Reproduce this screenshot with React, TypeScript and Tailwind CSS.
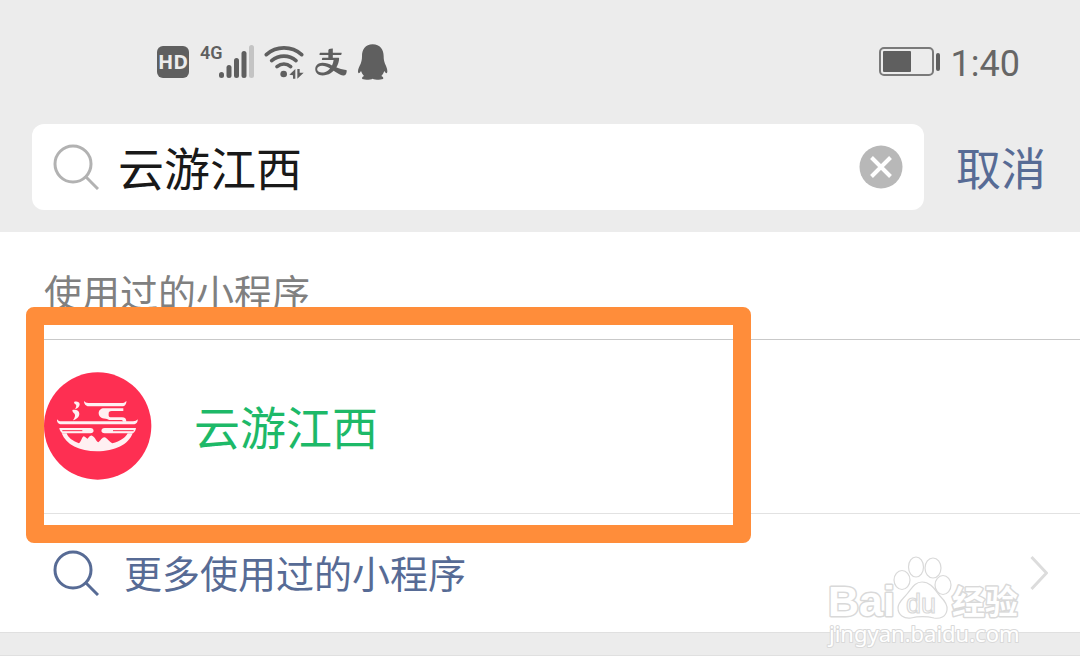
import React, { useState } from "react";
import { AiOutlineAlipay } from "react-icons/ai";

type IconProps = {
  className?: string;
};

const SearchIcon = ({ className }: IconProps) => (
  <svg
    viewBox="0 0 46 46"
    className={`size-[46px] shrink-0 ${className ?? ""}`}
    fill="none"
    stroke="currentColor"
    strokeWidth="3"
    aria-hidden="true"
  >
    <circle cx="20" cy="20" r="18" />
    <path d="M32 32 45 45" />
  </svg>
);

const SignalIcon = () => (
  <svg viewBox="0 0 54 36" className="w-[54px] h-9 overflow-visible" fill="currentColor">
    <text x="-1" y="15" fontFamily="Roboto, sans-serif" fontWeight="600" fontSize="18">
      4G
    </text>
    <rect x="18" y="28" width="5" height="6" rx="2.5" />
    <rect x="25.5" y="21" width="5" height="13" rx="2.5" />
    <rect x="33" y="14" width="5" height="20" rx="2.5" />
    <rect x="40.5" y="7" width="5" height="27" rx="2.5" />
    <rect x="48" y="1" width="5" height="33" rx="2.5" fill="#c4c4c4" />
  </svg>
);

const WifiIcon = () => (
  <svg viewBox="370 44 120 102" className="w-10 h-[34px]" fill="none">
    <g stroke="currentColor" strokeWidth="11" strokeLinecap="round">
      <path d="M377 73c30-27 76-27 106 0" />
      <path d="M393 91c22-18 52-18 73 0" />
      <path d="M409 109c13-10 29-10 41 0" />
    </g>
    <circle cx="429" cy="131" r="10" fill="currentColor" />
    <path d="M446 133l18-17v29h-7v-10zM470 116h7v11h12l-19 18z" fill="currentColor" />
  </svg>
);

const QqIcon = () => (
  <svg viewBox="659 43 90 108" className="w-[30px] h-9" fill="currentColor">
    <path d="M703 44c22 0 33 16 33 36 0 8 1 15 4 22 4 8 7 16 7 23 0 6-3 9-9-1-2 6-5 11-9 15 4 2 6 4 6 7 0 6-26 5-32 1-6 4-32 5-32-1 0-3 2-5 6-7-4-4-7-9-9-15-6 10-9 7-9 1 0-7 4-15 8-23 3-7 4-14 4-22 0-20 10-36 32-36z" />
  </svg>
);

const BatteryIcon = () => (
  <svg viewBox="0 0 62 30" className="w-[62px] h-[30px]" fill="none">
    <rect x="1" y="1" width="53" height="27" rx="4" stroke="#7a7a7a" strokeWidth="2" />
    <rect x="4" y="4" width="28" height="21" rx="1" fill="currentColor" />
    <rect x="57" y="6" width="4" height="18" rx="2" fill="currentColor" />
  </svg>
);

const StatusBar = () => (
  <div className="flex items-center justify-between h-[124px] pl-[157px] pr-[60px] text-[#5f5f5f]">
    <div className="flex items-center gap-3">
      <span className="flex items-center justify-center size-8 rounded-md bg-[#5f5f5f] text-[#ececec] text-xl font-bold font-['Open_Sans',sans-serif]">
        HD
      </span>
      <div className="flex items-center gap-[9px]">
        <SignalIcon />
        <WifiIcon />
        <AiOutlineAlipay className="size-9" />
        <QqIcon />
      </div>
    </div>
    <div className="flex items-center gap-2.5">
      <BatteryIcon />
      <time className="pt-1 text-[36px] leading-10 font-['Roboto',sans-serif] text-[#666666]">
        1:40
      </time>
    </div>
  </div>
);

const SearchBar = () => {
  const [keyword, setKeyword] = useState("云游江西");

  return (
    <form
      className="flex items-center gap-8 pl-8 pr-[34px] pb-[22px]"
      onSubmit={(e) => e.preventDefault()}
    >
      <div className="flex items-center flex-1 min-w-0 h-[86px] px-[21px] bg-white rounded-xl">
        <SearchIcon className="text-[#b2b2b2]" />
        <input
          type="text"
          aria-label="搜索"
          value={keyword}
          onChange={(e) => setKeyword(e.target.value)}
          className="flex-1 min-w-0 ml-[19px] pb-0.5 text-[46px] leading-[60px] text-[#191919] outline-none"
        />
        <button type="button" aria-label="清除" onClick={() => setKeyword("")}>
          <svg viewBox="0 0 44 44" className="size-11">
            <circle cx="22" cy="22" r="21.5" fill="#b8b8b8" />
            <path d="M12.5 12.5l19 19M31.5 12.5l-19 19" stroke="#fff" strokeWidth="4" />
          </svg>
        </button>
      </div>
      <button type="button" className="text-[45px] leading-[60px] text-[#576b95]">
        取消
      </button>
    </form>
  );
};

const AppLogo = () => (
  <svg viewBox="42 36 322 324" className="size-[108px] shrink-0" aria-hidden="true">
    <circle cx="202" cy="198" r="161" fill="#fe2f52" />
    <g fill="#fff0f2">
      <path d="M131 126c8-3 17 0 17 7 0 8-7 13-14 15 3-6 5-11 3-14-2-2-5-1-6-8z" />
      <path d="M126 150c11-3 21 2 21 11 0 11-10 17-19 20 5-7 8-15 5-19-2-3-7-4-7-12z" />
      <path d="M161 123c3 4 7 6 13 6h100c7 0 11-2 14-7 1 9-4 17-13 17H175c-9 0-14-8-14-16z" />
      <path d="M205 160c0-9 7-15 16-15h58v8h-35c-7 0-9 3-9 8-1 9 2 11 10 11h30c9 0 13 4 13 13h-10c0-3-2-5-7-5h-30c-7 0-9-4-15-4-14 0-21-7-21-16z" />
      <path d="M80 178c4 5 7 6 15 6h213c7 0 11-2 14-6 1 9-5 15-13 15H93c-8 0-14-6-13-15z" />
      <path d="M87 204h93c13 0 13 16 0 16H96c-5-4-8-9-9-16z" />
      <path d="M223 204h94c-1 7-4 12-9 16h-85c-13 0-13-16 0-16z" />
      <path d="M94 220h15c4 12 17 23 37 30 7-5 8-18 14-21 5 1 8 7 12 7 5-6 9-10 13-9 8 2 12 16 19 20 7-5 11-15 18-15 9 1 14 14 24 18 24-6 40-17 46-30h15c-12 34-54 54-107 54S107 254 94 220z" />
    </g>
    <path d="M96 212h60M248 212h62" stroke="#fe2f52" strokeWidth="3" />
  </svg>
);

const Watermark = () => (
  <svg
    viewBox="0 0 200 96"
    className="absolute right-[54px] top-[41px] w-[200px] h-24 pointer-events-none"
    fill="#ffffff"
    stroke="#d9d9d9"
    strokeWidth="1.2"
    aria-hidden="true"
  >
    <g strokeWidth="3" strokeLinejoin="round" paintOrder="stroke">
      <text x="2" y="61" fontFamily="'Liberation Sans', sans-serif" fontWeight="700" fontSize="43">
        Bai
      </text>
      <text x="126" y="59" fontFamily="'Noto Sans CJK SC', sans-serif" fontWeight="700" fontSize="33">
        经验
      </text>
      <text x="3" y="87" fontFamily="'Noto Sans', sans-serif" fontSize="22" strokeWidth="2">
        jingyan.baidu.com
      </text>
    </g>
    <ellipse cx="76" cy="25" rx="8" ry="9.5" />
    <ellipse cx="90" cy="12" rx="7.5" ry="10" />
    <ellipse cx="107" cy="13" rx="8" ry="10" />
    <ellipse cx="117" cy="30" rx="8" ry="9.5" />
    <path d="M96 27c9 0 13 8 18 14 5 5 8 9 7 14-1 7-7 9-13 8-8-2-15-2-23 0-7 1-13-3-13-10 0-6 5-9 9-14 5-6 8-12 15-12z" />
    <text x="80" y="58" fontFamily="'Liberation Sans', sans-serif" fontSize="27">
      du
    </text>
  </svg>
);

const App = () => {
  return (
    <div className="min-h-screen bg-white font-['Noto_Sans_CJK_SC',sans-serif]">
      <header className="bg-[#ececec]">
        <StatusBar />
        <SearchBar />
      </header>

      <main>
        <section>
          <h2 className="ml-11 h-[108px] pt-[31px] text-[38px] leading-[56px] text-[#808080] border-b border-[#c9c9c9]">
            使用过的小程序
          </h2>
          <div className="relative">
            <a
              href="#yunyou"
              className="flex items-center gap-[42px] ml-11 pb-0.5 h-[174px] border-b border-[#e2e2e2]"
            >
              <AppLogo />
              <span className="pb-0.5 text-[46px] leading-[60px] text-[#1db968]">
                云游江西
              </span>
            </a>
            {/* highlight frame around the result */}
            <div className="absolute left-[26px] -top-[33px] -bottom-[29px] w-[725px] rounded-lg border-[18px] border-[#ff8d3a] pointer-events-none" />
          </div>
          <div className="relative">
            <a
              href="#more"
              className="flex items-center h-[118px] pl-[53px] pr-8 text-[#576b95]"
            >
              <SearchIcon />
              <span className="ml-[25px] pb-0.5 text-[38px] leading-[56px]">
                更多使用过的小程序
              </span>
              <svg
                viewBox="0 0 18 36"
                className="w-[18px] h-9 ml-auto"
                fill="none"
                stroke="#dcdcdc"
                strokeWidth="3"
              >
                <path d="M1.5 2l15 16-15 16" />
              </svg>
            </a>
            <div className="h-6 bg-[#ececec] border-y border-[#e0e0e0]" />
            <Watermark />
          </div>
        </section>
      </main>
    </div>
  );
};

export default App;
